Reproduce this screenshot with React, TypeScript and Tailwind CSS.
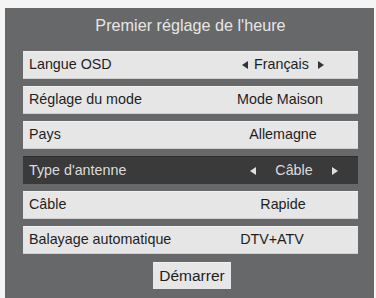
import React from "react";

const Left = ({ fill }: { fill: string }) => (
  <svg width="6" height="8" viewBox="0 0 6 8" className="shrink-0">
    <polygon points="6,0 6,8 0,4" fill={fill} />
  </svg>
);
const Right = ({ fill }: { fill: string }) => (
  <svg width="6" height="8" viewBox="0 0 6 8" className="shrink-0">
    <polygon points="0,0 0,8 6,4" fill={fill} />
  </svg>
);

function Row({
  label,
  children,
  dark = false,
  valueClass = "",
}: {
  label: string;
  children: React.ReactNode;
  dark?: boolean;
  valueClass?: string;
}) {
  return (
    <div
      className={
        dark
          ? "flex h-[28px] items-center bg-[#3a3a3a] text-[#dcdcdc] border-t border-[#2e2e2e]"
          : "flex h-[28px] items-center bg-[#e6e6e6] text-[#1e1e1e] border-t border-[#f2f2f2] border-b border-b-[#cfcfcf]"
      }
    >
      <div className="flex-1 pl-[6px] text-[14.3px]">{label}</div>
      <div className={"flex w-[150px] items-center justify-center text-[14.3px] " + valueClass}>
        {children}
      </div>
    </div>
  );
}

export default function App() {
  return (
    <div
      className="h-[298px] w-[376px] overflow-hidden bg-[#f4f4f4] pl-[5px] pr-[2px] pt-[8px]"
      style={{ fontFamily: '"Liberation Sans", Arial, sans-serif' }}
    >
      <div className="flex h-[290px] flex-col bg-[#676869] pl-[18px] pr-[16px]">
        <div className="flex h-[34px] items-center justify-center text-[16.2px] text-[#e6e6e6]">
          Premier réglage de l'heure
        </div>
        <div className="mt-[9px] flex flex-col gap-[7px]">
          <Row label="Langue OSD">
            <Left fill="#333" />
            <span className="ml-[6px] mr-[9px]">Français</span>
            <Right fill="#333" />
          </Row>
          <Row label="Réglage du mode" valueClass="pr-[6px]">
            Mode Maison
          </Row>
          <Row label="Pays">Allemagne</Row>
          <Row label="Type d'antenne" dark valueClass="pl-[22px]">
            <Left fill="#e0e0e0" />
            <span className="mx-[19px]">Câble</span>
            <Right fill="#e0e0e0" />
          </Row>
          <Row label="Câble">Rapide</Row>
          <Row label="Balayage automatique" valueClass="pr-[22px]">
            DTV+ATV
          </Row>
        </div>
        <div className="mt-[8px] flex justify-center pl-[3px]">
          <div className="flex h-[27px] w-[78px] items-center justify-center bg-[#e6e6e6] text-[15.5px] text-[#1e1e1e] border-t border-[#f2f2f2]">
            Démarrer
          </div>
        </div>
      </div>
    </div>
  );
}
